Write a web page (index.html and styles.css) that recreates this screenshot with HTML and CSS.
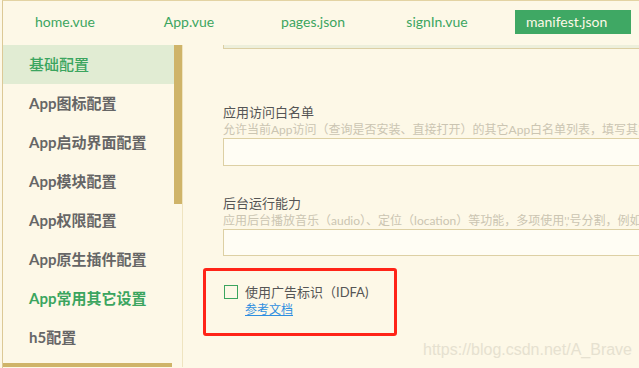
FILE: index.html
```html
<!DOCTYPE html>
<html lang="zh-CN">
<head>
    <meta charset="UTF-8">
    <meta name="viewport" content="width=device-width, initial-scale=1.0">
    <title>manifest.json</title>
    <link rel="stylesheet" href="styles.css">
</head>
<body>
    <div class="app">
        <nav class="tabs">
            <a class="tab">home.vue</a>
            <a class="tab">App.vue</a>
            <a class="tab">pages.json</a>
            <a class="tab">signIn.vue</a>
            <a class="tab active">manifest.json</a>
        </nav>

        <div class="main">
            <aside class="sidebar">
                <div class="side-body">
                    <ul class="menu">
                        <li class="item current">基础配置</li>
                        <li class="item">App图标配置</li>
                        <li class="item">App启动界面配置</li>
                        <li class="item">App模块配置</li>
                        <li class="item">App权限配置</li>
                        <li class="item">App原生插件配置</li>
                        <li class="item green">App常用其它设置</li>
                        <li class="item">h5配置</li>
                    </ul>
                    <div class="vscroll"><div class="vthumb"></div></div>
                </div>
                <div class="hthumb"></div>
            </aside>

            <section class="content">
                <div class="prev-input"></div>

                <div class="field first">
                    <div class="label">应用访问白名单</div>
                    <div class="hint">允许当前App访问（查询是否安装、直接打开）的其它App白名单列表，填写其它App的包名</div>
                    <input class="text-input" type="text">
                </div>

                <div class="field">
                    <div class="label">后台运行能力</div>
                    <div class="hint">应用后台播放音乐（audio）、定位（location）等功能，多项使用','号分割，例如audio,location</div>
                    <input class="text-input second" type="text">
                </div>

                <div class="check-row">
                    <span class="checkbox"></span>
                    <div class="check-text">
                        <div class="check-label">使用广告标识（IDFA)</div>
                        <a class="doc-link" href="#">参考文档</a>
                    </div>
                </div>

                <div class="mark-box"></div>
                <div class="watermark">https://blog.csdn.net/A_Brave</div>
            </section>
        </div>
    </div>
</body>
</html>
```

FILE: styles.css
```css
body {
    margin: 0;
    background-color: #fdf8e7;
    font-family: Lato, "Noto Sans CJK SC", sans-serif;
    overflow: hidden;
}
.app {
    margin-left: 2px;
    height: 367px;
    border-top: 1px solid #e3d3a3;
    border-left: 1px solid #dcc996;
}

/* tab bar */
.tabs {
    display: grid;
    grid-template-columns: repeat(4, 124px) auto;
    height: 44px;
    box-sizing: border-box;
    padding-top: 9px;
}
.tab {
    font-size: 14px;
    line-height: 24px;
    height: 24px;
    color: #3ca55f;
    text-align: center;
}
.tab.active {
    width: 116px;
    margin-left: 16px;
    padding-left: 11px;
    box-sizing: border-box;
    text-align: left;
    background-color: #3fa864;
    color: #fdf8e7;
}

.main {
    display: flex;
    height: 322px;
}

/* sidebar */
.sidebar {
    width: 179px;
    border-right: 1px solid #efe4c0;
    display: flex;
    flex-direction: column;
}
.side-body {
    display: flex;
    height: 319px;
}
.menu {
    list-style: none;
    margin: 0;
    padding: 0;
    width: 171px;
}
.item {
    height: 39px;
    line-height: 39px;
    padding-left: 26px;
    font-size: 15px;
    font-weight: bold;
    color: #666;
    white-space: nowrap;
}
.item.current {
    background-color: #e1ecd3;
    color: #3ba55f;
    font-weight: 500;
}
.item.green {
    color: #3ba55f;
}
.vscroll {
    width: 8px;
}
.vthumb {
    height: 159px;
    background-color: #cfb469;
}
.hthumb {
    width: 169px;
    height: 4px;
    margin-top: auto;
    background-color: #cfb469;
}

/* form */
.content {
    flex: 1;
    position: relative;
    overflow: hidden;
    padding-left: 40px;
}
.prev-input {
    width: 480px;
    height: 3px;
    background-color: #edefdb;
    border-left: 1px solid #dccfa4;
    border-bottom: 1px solid #dccfa4;
}
.field {
    margin-top: 27px;
    width: 480px;
}
.field.first {
    margin-top: 53px;
}
.label {
    font-size: 13px;
    line-height: 20px;
    color: #555;
}
.hint {
    font-size: 12px;
    line-height: 16px;
    color: #cbc5b2;
    white-space: nowrap;
}
.text-input {
    display: block;
    width: 480px;
    height: 28px;
    box-sizing: border-box;
    margin: 0;
    border: 1px solid #ddd0a4;
    background-color: #fffdf4;
}
.text-input.second {
    height: 27px;
}
.check-row {
    display: flex;
    gap: 7px;
    margin-top: 28px;
    margin-left: 1px;
}
.checkbox {
    width: 14px;
    height: 14px;
    box-sizing: border-box;
    border: 1px solid #3ca55f;
    margin-top: 1px;
}
.check-label {
    font-size: 13px;
    line-height: 16px;
    color: #555;
}
.doc-link {
    display: block;
    margin-top: 2px;
    font-size: 12px;
    line-height: 16px;
    color: #2f8fe0;
}

/* screenshot annotation */
.mark-box {
    position: absolute;
    left: 20px;
    top: 223px;
    width: 194px;
    height: 68px;
    box-sizing: border-box;
    border: 3px solid #ff2418;
    border-radius: 3px;
}
.watermark {
    position: absolute;
    left: 240px;
    top: 296px;
    font-family: "Liberation Sans", sans-serif;
    font-size: 16px;
    color: #e6e1d0;
    white-space: nowrap;
}
```
